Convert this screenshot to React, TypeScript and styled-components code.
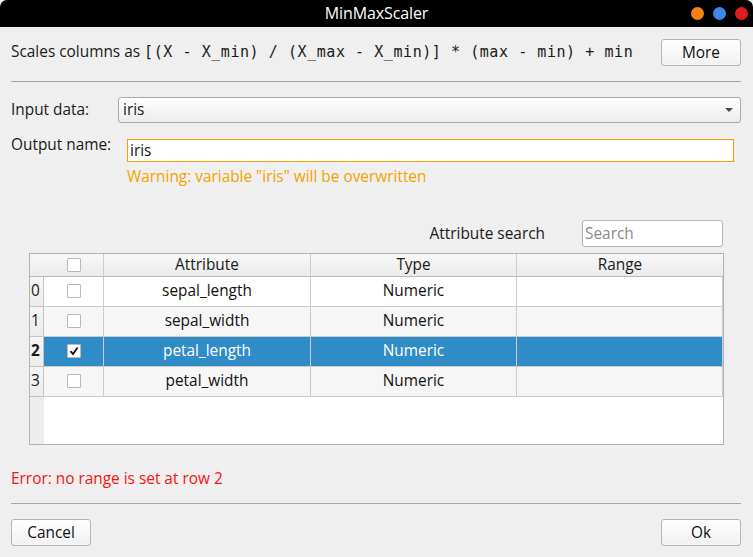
import styled, { createGlobalStyle } from "styled-components";

const GlobalStyle = createGlobalStyle`
  html, body {
    margin: 0;
    padding: 0;
    background: #efefef;
  }
  body {
    font-family: "Open Sans", "Noto Sans", sans-serif;
    font-size: 15.4px;
    color: #1a1a1a;
  }
`;

const rows = [
  { name: "sepal_length", type: "Numeric", checked: false },
  { name: "sepal_width", type: "Numeric", checked: false },
  { name: "petal_length", type: "Numeric", checked: true },
  { name: "petal_width", type: "Numeric", checked: false },
];
const selectedRow = 2;

const CheckMark = () => (
  <svg width="10" height="10" viewBox="0 0 10 10">
    <path d="M1.5 5.2 L4 8 L8.6 1.4" fill="none" stroke="#111" strokeWidth="1.8" />
  </svg>
);

export default function App() {
  return (
    <>
      <GlobalStyle />
      <Window>
        <TitleBar>
          <span />
          <Title>MinMaxScaler</Title>
          <Controls>
            <Dot color="#f7820f" />
            <Dot color="#3f86ee" />
            <Dot color="#dc1e1e" />
          </Controls>
        </TitleBar>

        <Body>
          <TopRow>
            <Description>
              Scales columns as <Mono>[(X - X_min) / (X_max - X_min)] * (max - min) + min</Mono>
            </Description>
            <PushButton>More</PushButton>
          </TopRow>

          <Separator $top={16} />

          <InputRow>
            <Label $width={107}>Input data:</Label>
            <Combo>
              iris
              <ComboArrow />
            </Combo>
          </InputRow>

          <OutputRow>
            <Label $width={116} $raised>
              Output name:
            </Label>
            <LineEdit value="iris" readOnly />
          </OutputRow>
          <Warning>Warning: variable "iris" will be overwritten</Warning>

          <SearchRow>
            <Label>Attribute search</Label>
            <SearchBox placeholder="Search" />
          </SearchRow>

          <Table>
            <HeaderCell $corner />
            <HeaderCell>
              <Box />
            </HeaderCell>
            <HeaderCell>Attribute</HeaderCell>
            <HeaderCell>Type</HeaderCell>
            <HeaderCell $last>Range</HeaderCell>

            {rows.map((r, i) => {
              const sel = i === selectedRow;
              return (
                <Row key={r.name}>
                  <RowHead $bold={sel}>{i}</RowHead>
                  <Cell $index={i} $selected={sel}>
                    <Box>{r.checked && <CheckMark />}</Box>
                  </Cell>
                  <Cell $index={i} $selected={sel}>
                    {r.name}
                  </Cell>
                  <Cell $index={i} $selected={sel}>
                    {r.type}
                  </Cell>
                  <Cell $index={i} $selected={sel} />
                </Row>
              );
            })}

            <EmptyArea>
              <EmptyHead />
              <EmptyFill />
            </EmptyArea>
          </Table>

          <ErrorText>Error: no range is set at row 2</ErrorText>

          <Separator $top={14} />

          <BottomRow>
            <PushButton>Cancel</PushButton>
            <PushButton>Ok</PushButton>
          </BottomRow>
        </Body>
      </Window>
    </>
  );
}

const Window = styled.div`
  width: 753px;
  height: 557px;
  display: flex;
  flex-direction: column;
  background: #efefef;
  overflow: hidden;
`;

const TitleBar = styled.div`
  height: 27px;
  flex-shrink: 0;
  background: #000;
  border-radius: 7px 7px 0 0;
  display: grid;
  grid-template-columns: 1fr auto 1fr;
  align-items: center;
`;

const Title = styled.div`
  color: #fff;
  font-size: 16px;
  font-weight: 500;
  letter-spacing: -0.1px;
  padding-bottom: 1px;
`;

const Controls = styled.div`
  display: flex;
  justify-content: flex-end;
  gap: 9px;
  padding-right: 5px;
`;

const Dot = styled.span<{ color: string }>`
  width: 13px;
  height: 13px;
  border-radius: 50%;
  background: ${(p) => p.color};
`;

const Body = styled.div`
  flex: 1;
  display: flex;
  flex-direction: column;
  padding: 12px 12px 11px 11px;
`;

const TopRow = styled.div`
  height: 26px;
  display: flex;
  align-items: center;
  justify-content: space-between;
`;

const Description = styled.div`
  white-space: nowrap;
  line-height: 20px;
`;

const Mono = styled.span`
  font-family: "DejaVu Sans Mono", monospace;
  font-size: 15px;
  letter-spacing: 0.56px;
`;

const PushButton = styled.button`
  width: 80px;
  height: 27px;
  padding: 0;
  font-family: "Open Sans", "Noto Sans", sans-serif;
  font-size: 15.4px;
  color: #111;
  background: linear-gradient(#ffffff, #f1f1f1);
  border: 1px solid #b5b5b5;
  border-radius: 3px;
`;

const Separator = styled.div<{ $top: number }>`
  height: 1px;
  margin-top: ${(p) => p.$top}px;
  background: #a6a6a6;
`;

const InputRow = styled.div`
  margin-top: 15px;
  height: 26px;
  display: flex;
  align-items: center;
`;

const Label = styled.div<{ $width?: number; $raised?: boolean }>`
  ${(p) => (p.$width ? `width: ${p.$width}px; flex-shrink: 0;` : "")}
  line-height: 20px;
  white-space: nowrap;
  ${(p) => (p.$raised ? "align-self: flex-start; margin-top: -4px;" : "")}
`;

const Combo = styled.div`
  flex: 1;
  height: 24px;
  display: flex;
  align-items: center;
  justify-content: space-between;
  padding: 0 7px 0 4px;
  background: linear-gradient(#ffffff, #ececec);
  border: 1px solid #a9a9a9;
  border-radius: 3px;
  line-height: 20px;
`;

const ComboArrow = styled.span`
  width: 0;
  height: 0;
  border-left: 4px solid transparent;
  border-right: 4px solid transparent;
  border-top: 4px solid #4a4a4a;
`;

const OutputRow = styled.div`
  margin-top: 16px;
  height: 22px;
  display: flex;
  align-items: center;
`;

const LineEdit = styled.input`
  box-sizing: border-box;
  width: 607px;
  height: 23px;
  padding: 0 2px;
  font-family: "Open Sans", "Noto Sans", sans-serif;
  font-size: 15.4px;
  color: #111;
  background: #fff;
  border: 1px solid #f5a300;
  outline: none;
`;

const Warning = styled.div`
  margin: 6px 0 0 116px;
  line-height: 20px;
  color: #f5a300;
`;

const SearchRow = styled.div`
  margin-top: 33px;
  padding-right: 18px;
  height: 27px;
  display: flex;
  align-items: center;
  justify-content: flex-end;
  gap: 37px;
`;

const SearchBox = styled.input`
  box-sizing: border-box;
  width: 141px;
  height: 27px;
  padding: 0 2px;
  font-family: "Open Sans", "Noto Sans", sans-serif;
  font-size: 15.4px;
  background: #fff;
  border: 1px solid #b4b4b4;
  border-radius: 3px;
  outline: none;
  &::placeholder {
    color: #8a8a8a;
  }
`;

const Table = styled.div`
  margin: 6px 0 0 18px;
  width: 695px;
  height: 192px;
  box-sizing: border-box;
  border: 1px solid #b3b3b3;
  background: #fff;
  display: grid;
  grid-template-columns: 14px 60px 207px 206px 206px;
  grid-template-rows: 23px repeat(4, 30px) 1fr;
`;

const HeaderCell = styled.div<{ $corner?: boolean; $last?: boolean }>`
  box-sizing: border-box;
  display: flex;
  align-items: center;
  justify-content: center;
  padding-bottom: 1px;
  background: linear-gradient(#f8f8f8, #ebebeb);
  border-bottom: 1px solid #b8b8b8;
  border-right: ${(p) => (p.$corner || p.$last ? "none" : "1px solid #cdcdcd")};
  line-height: 20px;
`;

const Row = styled.div`
  display: contents;
`;

const RowHead = styled.div<{ $bold?: boolean }>`
  box-sizing: border-box;
  display: flex;
  align-items: center;
  padding: 0 0 2px 1px;
  background: linear-gradient(#f6f6f6, #ececec);
  border-right: 1px solid #c4c4c4;
  border-bottom: 1px solid #c4c4c4;
  font-weight: ${(p) => (p.$bold ? 700 : 400)};
`;

const Cell = styled.div<{ $index: number; $selected?: boolean }>`
  box-sizing: border-box;
  display: flex;
  align-items: center;
  justify-content: center;
  padding-bottom: 2px;
  border-right: 1px solid #cbcbcb;
  border-bottom: 1px solid #cbcbcb;
  background: ${(p) => (p.$selected ? "#308cc6" : p.$index % 2 ? "#f6f6f6" : "#ffffff")};
  color: ${(p) => (p.$selected ? "#ffffff" : "#111")};
`;

const Box = styled.span`
  box-sizing: border-box;
  width: 14px;
  height: 14px;
  display: flex;
  align-items: center;
  justify-content: center;
  background: #fff;
  border: 1px solid #b9b9b9;
  border-radius: 1px;
`;

const EmptyArea = styled.div`
  grid-column: 1 / -1;
  display: flex;
`;

const EmptyHead = styled.div`
  width: 14px;
  background: #ededed;
`;

const EmptyFill = styled.div`
  flex: 1;
  background: #fff;
`;

const ErrorText = styled.div`
  margin-top: 24px;
  line-height: 20px;
  color: #f51414;
`;

const BottomRow = styled.div`
  margin-top: 15px;
  display: flex;
  justify-content: space-between;
`;
